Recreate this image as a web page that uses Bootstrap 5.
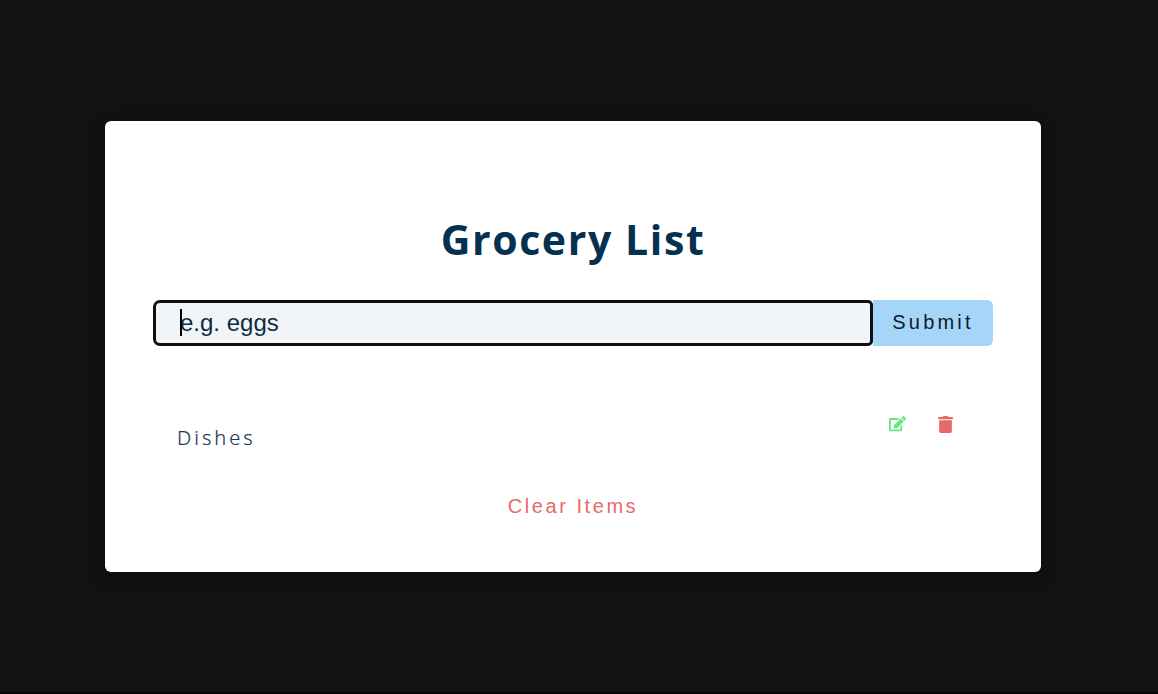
<!DOCTYPE html>
<html lang="en">
<head>
<meta charset="utf-8">
<meta name="viewport" content="width=device-width, initial-scale=1">
<title>Grocery List</title>
<link href="https://cdn.jsdelivr.net/npm/bootstrap@5.3.0/dist/css/bootstrap.min.css" rel="stylesheet">
<style>
body{background:#121212;color:#102a42;font-family:"Open Sans","Noto Sans",sans-serif;border-bottom:2px solid #070508}
.grocery-panel{width:936px;height:451px;margin:121px 0 0 105px;padding:93px 48px 0;border-radius:6px;box-shadow:0 5px 15px rgba(0,0,0,.3)}
.grocery-title{font-size:41px;line-height:50px;font-weight:700;letter-spacing:1.6px;color:#053151}
.entry-row{height:46px;margin-top:36px}
.entry-field.form-control{width:720px;flex:none;height:46px;padding:0 0 0 24px;border:3px solid #101010;border-radius:7px 5px 5px 7px;background:#f1f5f8;color:#102a42;font:24px/40px "Liberation Sans",sans-serif;caret-color:transparent}
.entry-field.form-control::placeholder{color:#102a42;opacity:1}
.entry-caret{left:27px;top:9px;width:2px;height:27px;background:#000}
.submit-btn.btn{width:120px;padding:0 0 2px;border:0;border-radius:0 6px 6px 0;background:#a5d5f8;color:#101c28;font:20px/42px "Liberation Sans",sans-serif;letter-spacing:3.2px}
.list-entry{height:48px;margin-top:56px;padding:0 40px 0 24px}
.entry-name{font-size:20px;line-height:28px;letter-spacing:2.5px;margin-top:22px;font-family:"Noto Sans","Open Sans",sans-serif;font-weight:300;color:#233b52;-webkit-text-stroke:.2px #233b52;letter-spacing:3px}
.entry-actions{gap:32px;margin-top:14px}
.icon-btn.btn{border:0;padding:0;line-height:0}
.icon-btn svg{display:block}
.edit-icon{fill:#69e781}
.trash-icon{fill:#e66a6a}
.clear-btn.btn{border:0;padding:0;margin-top:44px;color:#e66a6a;font:20px/24px "Liberation Sans",sans-serif;letter-spacing:2.55px}
</style>
</head>
<body class="vh-100 overflow-hidden d-flex align-items-start">
<main class="grocery-panel bg-white flex-shrink-0">
  <h1 class="grocery-title text-center mb-0">Grocery List</h1>
  <form class="entry-row d-flex position-relative">
    <input class="entry-field form-control" type="text" placeholder="e.g. eggs" aria-label="Item">
    <span class="entry-caret position-absolute"></span>
    <button class="submit-btn btn" type="button">Submit</button>
  </form>
  <div class="list-entry d-flex justify-content-between align-items-start">
    <p class="entry-name mb-0">Dishes</p>
    <div class="entry-actions d-flex align-items-start">
      <button class="icon-btn btn" type="button" aria-label="Edit"><svg class="edit-icon" width="17" height="15.5" viewBox="0 0 576 512"><path d="M402.6 83.200l90.200 90.200c3.800 3.800 3.800 10 0 13.800L274.400 405.600l-92.800 10.300c-12.400 1.400-22.900-9.100-21.500-21.500l10.300-92.800L388.800 83.200c3.800-3.800 10-3.800 13.800 0zm162-22.900l-48.800-48.800c-15.200-15.200-39.900-15.200-55.200 0l-35.400 35.400c-3.800 3.800-3.800 10 0 13.800l90.200 90.200c3.800 3.800 10 3.800 13.800 0l35.400-35.400c15.200-15.300 15.200-40 0-55.200zM384 346.200V448H64V128h229.800c3.200 0 6.200-1.300 8.500-3.500l40-40c7.600-7.600 2.200-20.500-8.500-20.500H48C21.500 64 0 85.500 0 112v352c0 26.500 21.500 48 48 48h352c26.500 0 48-21.500 48-48V306.200c0-10.700-12.900-16-20.500-8.500l-40 40c-2.200 2.300-3.500 5.300-3.500 8.500z"/></svg></button>
      <button class="icon-btn btn" type="button" aria-label="Delete"><svg class="trash-icon" width="15" height="17" viewBox="0 0 448 512"><path d="M432 32H312l-9.400-18.700A24 24 0 0 0 281.100 0H166.800a23.700 23.700 0 0 0-21.400 13.300L136 32H16A16 16 0 0 0 0 48v32a16 16 0 0 0 16 16h416a16 16 0 0 0 16-16V48a16 16 0 0 0-16-16zM32 467a48 45 0 0 0 48 45h288a48 45 0 0 0 48-45L416 128H32z"/></svg></button>
    </div>
  </div>
  <div class="text-center"><button class="clear-btn btn" type="button">Clear Items</button></div>
</main>
<script src="https://cdn.jsdelivr.net/npm/bootstrap@5.3.0/dist/js/bootstrap.bundle.min.js"></script>
</body>
</html>
